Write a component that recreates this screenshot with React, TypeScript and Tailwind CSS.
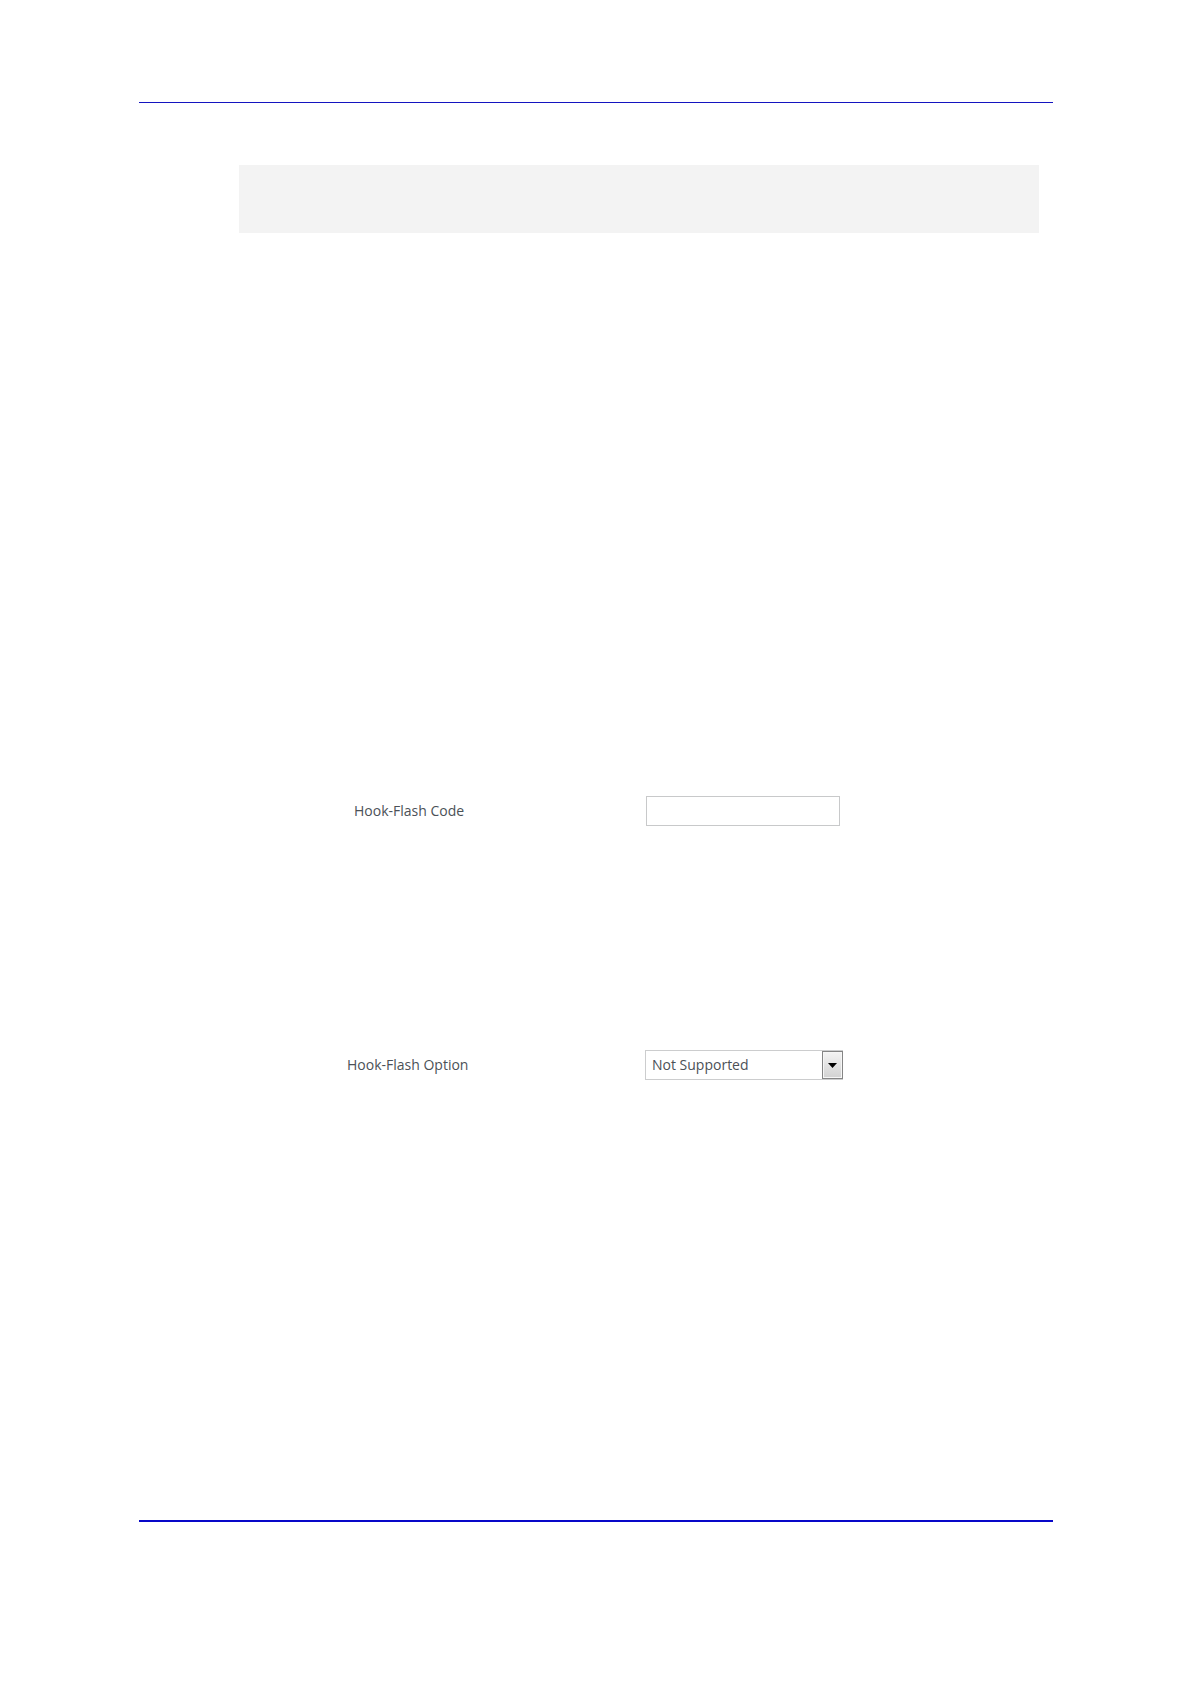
import React, { useState } from 'react';

const fieldText = "font-['Open_Sans','Noto_Sans',sans-serif] text-sm text-[#4b5157]";

const App: React.FC = () => {
  const [code, setCode] = useState('');
  const [option, setOption] = useState('Not Supported');

  return (
    <main className={`min-h-screen bg-white pl-[139px] pr-[138px] pt-[102px] ${fieldText}`}>
      <hr className="border-t border-[#1414c0]" />

      <div className="mt-[62px] ml-[100px] mr-[14px] h-[68px] bg-[#f3f3f3]"></div>

      <form className="mt-[563px]" onSubmit={(e) => e.preventDefault()}>
        <div className="flex items-center pl-[215px]">
          <label htmlFor="hook-flash-code" className="w-[292px] shrink-0">
            Hook-Flash Code
          </label>
          <input
            id="hook-flash-code"
            type="text"
            value={code}
            onChange={(e) => setCode(e.target.value)}
            className="h-[30px] w-[194px] border border-[#c8c9ca] bg-white px-1.5 outline-none"
          />
        </div>

        <div className="mt-[224px] flex items-center pl-[208px]">
          <label htmlFor="hook-flash-option" className="w-[298px] shrink-0">
            Hook-Flash Option
          </label>
          <div className="relative">
            <select
              id="hook-flash-option"
              value={option}
              onChange={(e) => setOption(e.target.value)}
              className="block h-[30px] w-[198px] appearance-none border border-[#cccdce] bg-white pl-1.5 pr-6 outline-none"
            >
              <option>Not Supported</option>
              <option>Supported</option>
            </select>
            {/* drop-down button face */}
            <span className="pointer-events-none absolute inset-y-px right-0 flex w-[21px] items-center justify-center border border-[#858585] bg-linear-to-b from-[#f4f4f4] to-[#d2d2d2] shadow-[inset_0_0_0_1px_#f6f6f6]">
              <svg width="9" height="5" viewBox="0 0 9 5" aria-hidden="true">
                <path d="M0 0h9L4.5 5z" fill="#000" />
              </svg>
            </span>
          </div>
        </div>
      </form>

      <hr className="mt-[440px] border-t-2 border-[#0808c8]" />
    </main>
  );
};

export default App;
